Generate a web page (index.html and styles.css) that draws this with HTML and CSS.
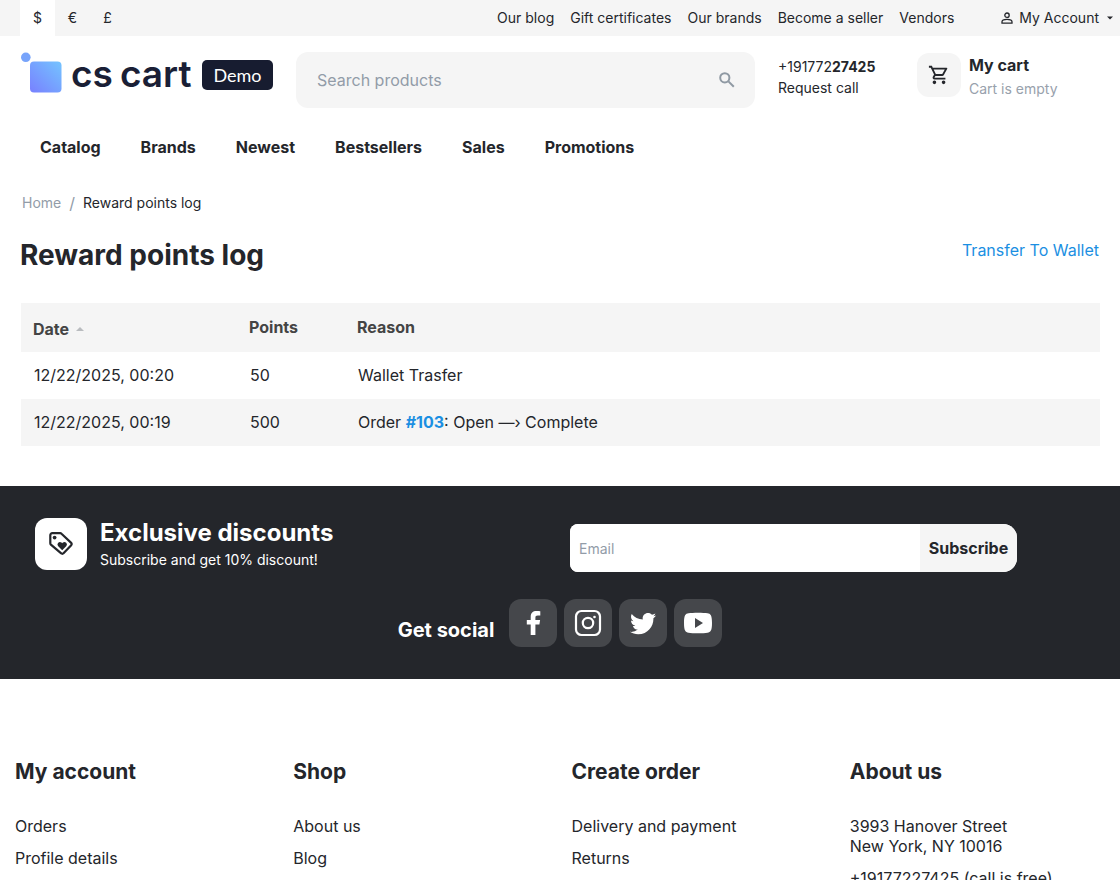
FILE: index.html
```html
<!DOCTYPE html>
<html lang="en">
<head>
<meta charset="utf-8">
<meta name="viewport" content="width=device-width, initial-scale=1">
<title>Reward points log</title>
<link rel="stylesheet" href="styles.css">
</head>
<body>
<div class="topbar">
  <div class="currencies">
    <a class="currency currency-active" href="#">$</a>
    <a class="currency" href="#">€</a>
    <a class="currency" href="#">£</a>
  </div>
  <nav class="quick-links" aria-label="Quick links">
    <a href="#">Our blog</a>
    <a href="#">Gift certificates</a>
    <a href="#">Our brands</a>
    <a href="#">Become a seller</a>
    <a href="#">Vendors</a>
  </nav>
  <button class="account" type="button">
    <svg width="12" height="12" viewBox="0 0 12 12" fill="none" stroke="currentColor" stroke-width="1.3"><circle cx="6" cy="3.2" r="2.2"/><path d="M1 11.2V9.7C1 8 4 7.3 6 7.3S11 8 11 9.7v1.5z"/></svg>
    <span>My Account</span>
    <svg class="caret" width="6" height="4" viewBox="0 0 6 4" fill="currentColor"><path d="M0 .5h6L3 3.5z"/></svg>
  </button>
</div>

<header class="header">
  <a class="logo" href="#" aria-label="cs cart Demo">
    <svg width="42" height="42" viewBox="0 0 42 42">
      <defs><linearGradient id="tile" x1="0" y1="1" x2="1" y2="0"><stop offset="0" stop-color="#7880ff"/><stop offset="1" stop-color="#74c4ff"/></linearGradient></defs>
      <circle cx="5.8" cy="5.3" r="4.8" fill="#78a4fb"/>
      <rect x="10" y="9.5" width="31.5" height="31" rx="4" fill="url(#tile)"/>
    </svg>
    <span class="logo-name"><span>cs</span> <span>cart</span></span>
    <span class="logo-tag">Demo</span>
  </a>
  <form class="search">
    <input type="search" placeholder="Search products" aria-label="Search products">
    <button type="button" aria-label="Search">
      <svg width="16" height="16" viewBox="0 0 16 16" fill="none" stroke="currentColor" stroke-width="2"><circle cx="5.8" cy="5.8" r="4.6"/><path d="M9.4 9.4l5.4 5.4"/></svg>
    </button>
  </form>
  <div class="phone">
    <a href="#">+191772<b>27425</b></a>
    <a href="#">Request call</a>
  </div>
  <a class="cart" href="#">
    <span class="cart-icon">
      <svg width="22" height="22" viewBox="0 0 24 24" fill="currentColor"><path d="M15.550 13c.75 0 1.410-.41 1.750-1.030l3.580-6.490A.996.996 0 0 0 20.010 4H5.210l-.94-2H1v2h2l3.600 7.590-1.350 2.440C4.520 15.370 5.480 17 7 17h12v-2H7l1.100-2h7.450zM6.160 6h12.150l-2.760 5H8.530L6.160 6zM7 18a2 2 0 1 0 0 4 2 2 0 0 0 0-4zm10 0a2 2 0 1 0 0 4 2 2 0 0 0 0-4z"/></svg>
    </span>
    <span class="cart-text"><b>My cart</b><span>Cart is empty</span></span>
  </a>
</header>

<nav class="menu" aria-label="Main">
  <a href="#">Catalog</a>
  <a href="#">Brands</a>
  <a href="#">Newest</a>
  <a href="#">Bestsellers</a>
  <a href="#">Sales</a>
  <a href="#">Promotions</a>
</nav>

<main class="content">
  <nav class="breadcrumbs" aria-label="Breadcrumbs"><a href="#">Home</a><span class="separator">/</span><span class="current">Reward points log</span></nav>
  <div class="title-row">
    <h1>Reward points log</h1>
    <a href="#">Transfer To Wallet</a>
  </div>
  <table class="log">
    <thead>
      <tr>
        <th class="col-date"><a class="sort" href="#">Date <svg width="8" height="4" viewBox="0 0 8 4" fill="#b9bcbf"><path d="M0 4h8L4 0z"/></svg></a></th>
        <th class="col-points">Points</th>
        <th>Reason</th>
      </tr>
    </thead>
    <tbody>
      <tr><td>12/22/2025, 00:20</td><td>50</td><td>Wallet Trasfer</td></tr>
      <tr><td>12/22/2025, 00:19</td><td>500</td><td>Order <a href="#">#103</a>: Open —› Complete</td></tr>
    </tbody>
  </table>
</main>

<section class="promo">
  <div class="promo-row">
    <div class="discount">
      <span class="discount-icon">
        <svg width="26" height="26" viewBox="0 0 26 26"><path d="M2.300 4.200a2 2 0 0 1 2-2h7.800a2 2 0 0 1 1.400.6l9.700 9.100a1.600 1.600 0 0 1 0 2.300l-7.700 8.100a1.600 1.600 0 0 1-2.300 0L2.900 13.600a2 2 0 0 1-.6-1.400z" fill="none" stroke="currentColor" stroke-width="2.200" stroke-linejoin="round"/><circle cx="6.600" cy="6.600" r="1.900" fill="currentColor"/><path d="M14.200 19.200l-4.200-4.200a2.500 2.500 0 0 1 3.500-3.500l.7.700.7-.7a2.500 2.500 0 0 1 3.500 3.500z" fill="currentColor"/></svg>
      </span>
      <div class="discount-text">
        <h2>Exclusive discounts</h2>
        <p>Subscribe and get 10% discount!</p>
      </div>
    </div>
    <form class="subscribe">
      <input type="email" placeholder="Email" aria-label="Email">
      <button type="button">Subscribe</button>
    </form>
  </div>
  <div class="social">
    <h2>Get social</h2>
    <div class="social-links">
      <a href="#" aria-label="Facebook"><svg width="28" height="28" viewBox="0 0 28 28" fill="currentColor"><path d="M11.700 26V15.500H7.800v-4.400h3.900V7.900c0-4 2.200-5.900 5.700-5.900 1.500 0 2.900.1 3.900.3v4.100h-2.400c-2 0-2.500.9-2.500 2.300v2.400h4.700l-.7 4.400h-4v10.500z"/></svg></a>
      <a href="#" aria-label="Instagram"><svg width="28" height="28" viewBox="0 0 28 28"><rect x="2" y="2" width="24" height="24" rx="5.500" fill="none" stroke="currentColor" stroke-width="2.200"/><circle cx="14" cy="14" r="5.200" fill="none" stroke="currentColor" stroke-width="2.200"/><circle cx="20.500" cy="8" r="1.300" fill="currentColor"/></svg></a>
      <a href="#" aria-label="Twitter"><svg width="30" height="30" viewBox="0 0 24 24" fill="currentColor"><path d="M22.460 6c-.77.350-1.600.580-2.460.690.880-.530 1.560-1.370 1.880-2.380-.83.500-1.750.850-2.720 1.050C18.370 4.500 17.260 4 16 4c-2.350 0-4.270 1.920-4.270 4.290 0 .340.040.670.110.980C8.280 9.090 5.110 7.380 3 4.790c-.37.630-.58 1.370-.58 2.150 0 1.490.75 2.810 1.910 3.560-.71 0-1.370-.2-1.950-.5v.030c0 2.080 1.480 3.820 3.440 4.210a4.220 4.220 0 0 1-1.930.070 4.280 4.280 0 0 0 4 2.980 8.521 8.521 0 0 1-5.330 1.840c-.34 0-.68-.02-1.020-.06C3.440 20.290 5.700 21 8.120 21 16 21 20.330 14.460 20.330 8.790c0-.19 0-.37-.01-.56.840-.6 1.560-1.360 2.140-2.230z"/></svg></a>
      <a href="#" aria-label="YouTube"><svg width="28" height="28" viewBox="0 0 28 28"><path d="M4.500 4.300c4-.7 15-.7 19 0 3 .5 4.500 1.800 4.500 9.700s-1.500 9.200-4.500 9.700c-4 .7-15 .7-19 0-3-.5-4.500-1.800-4.500-9.700s1.500-9.200 4.500-9.700zM11 9v10l8-5z" fill="currentColor" fill-rule="evenodd"/></svg></a>
    </div>
  </div>
</section>

<footer class="footer">
  <section>
    <h2>My account</h2>
    <ul><li><a href="#">Orders</a></li><li><a href="#">Profile details</a></li></ul>
  </section>
  <section>
    <h2>Shop</h2>
    <ul><li><a href="#">About us</a></li><li><a href="#">Blog</a></li></ul>
  </section>
  <section>
    <h2>Create order</h2>
    <ul><li><a href="#">Delivery and payment</a></li><li><a href="#">Returns</a></li></ul>
  </section>
  <section>
    <h2>About us</h2>
    <ul><li>3993 Hanover Street<br>New York, NY 10016</li><li>+19177227425 (call is free)</li></ul>
  </section>
</footer>
</body>
</html>
```
FILE: styles.css
```css
* { box-sizing: border-box; }
body { margin: 0; background: #fff; color: #24262b; font: 16px/20px Inter, sans-serif; }
a { color: inherit; text-decoration: none; }
button, input { font: inherit; color: inherit; border: 0; }
h1, h2, p, ul { margin: 0; padding: 0; }
ul { list-style: none; }
svg { display: block; flex: none; }

.topbar { display: flex; align-items: center; height: 36px; padding: 0 7px 0 20px; background: #f5f5f5; font-size: 14px; }
.currencies { display: flex; margin-right: auto; }
.currency { width: 35px; text-align: center; line-height: 36px; }
.currency-active { background: #fff; }
.quick-links { display: flex; gap: 16px; white-space: nowrap; }
.account { display: flex; align-items: center; gap: 6px; margin-left: 47px; padding: 0; background: none; white-space: nowrap; }
.caret { margin-left: 2px; }

.header { display: flex; align-items: flex-start; padding: 16px 20px 0; }
.logo { display: flex; flex: none; width: 276px; color: #1a1f36; }
.logo-name { display: flex; gap: 7px; margin-left: 9px; font-size: 37px; line-height: 44px; font-weight: 600; white-space: nowrap; }
.logo-tag { align-self: flex-start; width: 71px; margin: 8px 23px 0 auto; border-radius: 5px; background: #171c30; color: #fff; font: 18px/30px Lato, sans-serif; text-align: center; }
.search { display: flex; flex: 1; min-width: 0; height: 56px; border-radius: 12px; background: #f5f5f5; }
.search input { flex: 1; min-width: 0; padding: 0 0 0 21px; background: none; outline: none; }
.search button { padding: 0 20px; background: none; color: #8f99a3; }
input::placeholder { color: #929ca8; opacity: 1; }
.phone { display: flex; flex-direction: column; width: 139px; margin-left: 23px; padding-top: 4px; font-size: 14px; line-height: 21px; white-space: nowrap; }
.cart { display: flex; gap: 8px; width: 183px; padding-top: 1px; white-space: nowrap; }
.cart-icon { display: grid; place-items: center; flex: none; width: 44px; height: 44px; border-radius: 12px; background: #f5f5f5; }
.cart-text { display: flex; flex-direction: column; font-size: 14px; line-height: 24px; color: #98a1ac; }
.cart-text b { font-size: 16px; color: #24262b; }

.menu { display: flex; gap: 40px; padding: 29px 40px 0; font-weight: 700; }

.content { padding: 36px 20px 40px; }
.breadcrumbs { display: flex; gap: 8px; padding-left: 2px; font-size: 14px; color: #929ca8; }
.separator { font-size: 16px; }
.current { color: #24262b; }
.title-row { display: flex; justify-content: space-between; padding: 24px 1px 0 0; }
h1 { font-size: 28px; line-height: 36px; }
.title-row a { line-height: 26px; color: #1b8fe2; }
.log { width: calc(100% - 1px); margin: 30px 0 0 1px; border-collapse: collapse; table-layout: fixed; text-align: left; }
.log th { height: 49px; padding: 12px 12px 9px; vertical-align: top; line-height: 24px; color: #444; }
.log td { height: 47px; padding: 0 13px 2px; }
.log thead tr, .log tbody tr:nth-child(even) { background: #f5f5f5; }
.log td a { color: #1b8fe2; font-weight: 700; }
.col-date { width: 216px; }
.col-points { width: 108px; }
.sort { display: flex; align-items: center; gap: 7px; line-height: 28px; }

.promo { padding: 32px 35px; background: #24262b; color: #fff; }
.promo-row { display: grid; grid-template-columns: 535px 1fr; align-items: start; }
.discount { display: flex; gap: 13px; }
.discount-icon { display: grid; place-items: center; width: 52px; height: 52px; border-radius: 12px; background: #fff; color: #24262b; }
.discount h2 { font-size: 24px; line-height: 30px; }
.discount p { font-size: 14px; line-height: 24px; }
.subscribe { display: flex; height: 48px; margin: 6px 68px 0 0; border-radius: 8px 14px 14px 8px; background: #fff; overflow: hidden; color: #24262b; }
.subscribe input { flex: 1; min-width: 0; padding: 2px 9px 0; background: #fff; font-size: 14px; outline: none; }
.subscribe button { width: 97px; padding: 0; background: #f5f5f5; font-weight: 700; }
.social { display: flex; justify-content: center; gap: 15px; padding-top: 27px; }
.social h2 { padding-top: 14px; font-size: 20px; line-height: 34px; }
.social-links { display: flex; gap: 7px; }
.social-links a { display: grid; place-items: center; width: 48px; height: 48px; border-radius: 12px; background: #45474b; }

.footer { display: grid; grid-template-columns: repeat(4, 1fr); gap: 23px; padding: 79px 15px 40px; }
.footer h2 { margin-bottom: 30px; font-size: 21px; line-height: 28px; }
.footer li { margin-bottom: 12px; }
```
